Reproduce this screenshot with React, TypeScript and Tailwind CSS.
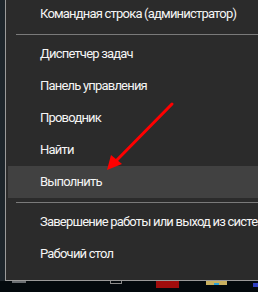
import React from 'react';

type Entry = { label: string; active?: boolean } | 'sep';

const ENTRIES: Entry[] = [
    { label: 'Командная строка (администратор)' },
    'sep',
    { label: 'Диспетчер задач' },
    { label: 'Панель управления' },
    { label: 'Проводник' },
    { label: 'Найти' },
    { label: 'Выполнить', active: true },
    'sep',
    { label: 'Завершение работы или выход из системы' },
    { label: 'Рабочий стол' },
];

const App: React.FC = () => {
    return (
        <div className="w-[258px] h-[292px] overflow-hidden bg-[#03090d] flex flex-col" style={{ fontFamily: 'Roboto, "Noto Sans", sans-serif' }}>
            <div className="flex h-[281px] shrink-0">
                <div className="w-[5px] bg-[#1d252b]" />
                <div className="flex-1 min-w-0 relative bg-[#2b2b2b] border-l border-b border-[#9a9a9a] flex flex-col">
                    <div className="-mt-[2px] flex flex-col">
                        {ENTRIES.map((e, i) =>
                            e === 'sep' ? (
                                <div key={i} className="h-[6px] flex items-center pl-[10px] my-[1px]">
                                    <div className="h-[1px] w-full bg-[#7a7a7a]" />
                                </div>
                            ) : (
                                <div
                                    key={i}
                                    className={`h-[32px] flex items-center pl-[32px] ml-[2px] whitespace-nowrap overflow-hidden text-[13px] tracking-[-0.8px] text-[#f5f5f5] ${e.active ? 'bg-[#414141]' : ''}`}
                                >
                                    {e.label}
                                </div>
                            )
                        )}
                    </div>
                    <svg className="absolute left-0 top-0 pointer-events-none" width="252" height="280" viewBox="0 0 252 280">
                        <line x1="166" y1="104" x2="108" y2="163" stroke="#ff0000" strokeWidth="3" strokeLinecap="round" />
                        <polygon points="101,170 105,155 116,164" fill="#ff0000" />
                    </svg>
                </div>
            </div>
            <div className="flex-1 flex items-start">
                <div className="ml-[12px] w-[14px] h-[2px] bg-[#6a6e72]" />
                <div className="ml-[84px] w-[12px] h-[3px] border-x border-b border-[#8a8a8a]" />
                <div className="ml-[34px] w-[23px] h-[7px] bg-[#a00d0d]" />
                <div className="ml-[27px] w-[21px] h-[4px] bg-[#c8b060] flex justify-center items-end">
                    <div className="w-[5px] h-[2px] bg-[#2aa0d8]" />
                </div>
                <div className="ml-[26px] mt-[2px] w-[5px] h-[4px] bg-[#3040c0]" />
            </div>
        </div>
    );
};

export default App;
